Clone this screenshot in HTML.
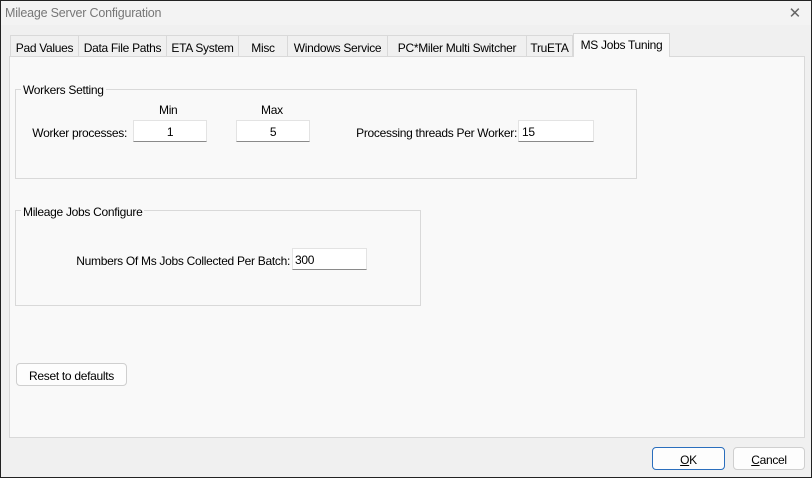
<!DOCTYPE html><html><head><style>
*{box-sizing:border-box;margin:0;padding:0}
body{width:812px;height:478px;overflow:hidden;background:#f0f0f0;font-family:"Liberation Sans",sans-serif;font-size:12px;letter-spacing:-0.3px;color:#000;position:relative}
.frame{position:absolute;left:0;top:0;width:812px;height:478px;border:1px solid #222;z-index:10;pointer-events:none}
.title{position:absolute;left:0;top:0;width:812px;height:25px;background:#f3f3f3;color:#777;font-size:12.5px;padding:6px 0 0 5px;letter-spacing:-0.2px}
.x{position:absolute;right:11px;top:4px;color:#666;font-size:15px}
.tab{position:absolute;top:35px;height:22px;border:1px solid #d9d9d9;border-bottom:none;background:#f0f0f0;text-align:center;padding-top:5px;white-space:nowrap}
.sel{top:33px;height:24px;background:#f9f9f9;z-index:2;padding-top:4px}
.panel{position:absolute;left:9px;top:56px;width:796px;height:382px;background:#f9f9f9;border:1px solid #d9d9d9}
.grp{position:absolute;border:1px solid #d9d9d9}
.lg{position:absolute;background:#f9f9f9;padding:0 2px}
.lbl{position:absolute;white-space:nowrap}
.r{text-align:right}
.in{position:absolute;height:22px;background:#fff;border:1px solid #e3e3e3;border-bottom:1px solid #8a8a8a;padding-top:4px}
.btn{position:absolute;height:23px;background:#fdfdfd;border:1px solid #cfcfcf;border-radius:4px;text-align:center;padding-top:5px}
</style></head><body>
<div class="frame"></div>
<div class="title">Mileage Server Configuration<span class="x">✕</span></div>
<div class="tab" style="left:10px;width:69px">Pad Values</div>
<div class="tab" style="left:78px;width:89px">Data File Paths</div>
<div class="tab" style="left:166px;width:73px">ETA System</div>
<div class="tab" style="left:238px;width:50px">Misc</div>
<div class="tab" style="left:287px;width:101px">Windows Service</div>
<div class="tab" style="left:387px;width:140px">PC*Miler Multi Switcher</div>
<div class="tab" style="left:526px;width:47px">TruETA</div>
<div class="tab sel" style="left:573px;width:97px">MS Jobs Tuning</div>
<div class="panel"></div>
<div class="grp" style="left:15px;top:89px;width:622px;height:90px"></div>
<div class="lg" style="left:21px;top:83px">Workers Setting</div>
<div class="lbl" style="left:159px;top:103px">Min</div>
<div class="lbl" style="left:261px;top:103px">Max</div>
<div class="lbl r" style="left:20px;width:107px;top:126px">Worker processes:</div>
<div class="in" style="left:133px;top:120px;width:74px;text-align:center">1</div>
<div class="in" style="left:236px;top:120px;width:74px;text-align:center">5</div>
<div class="lbl r" style="left:330px;width:187px;top:126px">Processing threads Per Worker:</div>
<div class="in" style="left:518px;top:120px;width:76px;padding-left:3px">15</div>
<div class="grp" style="left:15px;top:210px;width:406px;height:96px"></div>
<div class="lg" style="left:21px;top:205px">Mileage Jobs Configure</div>
<div class="lbl r" style="left:40px;width:250px;top:254px">Numbers Of Ms Jobs Collected Per Batch:</div>
<div class="in" style="left:292px;top:248px;width:75px;padding-left:2px">300</div>
<div class="btn" style="left:16px;top:363px;width:111px">Reset to defaults</div>
<div class="btn" style="left:652px;top:447px;width:73px;border:1px solid #2a6ebd"><u>O</u>K</div>
<div class="btn" style="left:733px;top:447px;width:72px"><u>C</u>ancel</div>
</body></html>
